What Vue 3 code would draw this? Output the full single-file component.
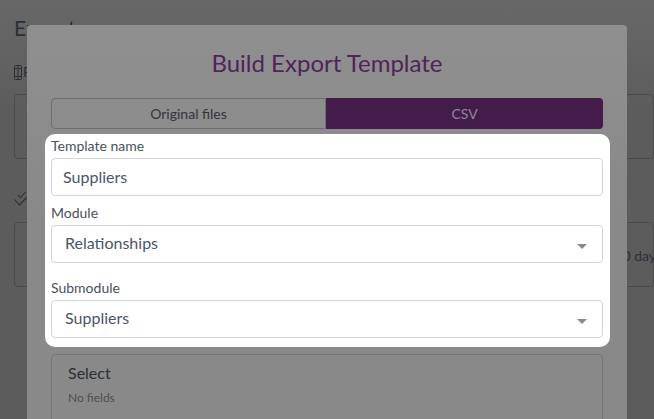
<script setup>
const fields = [
  { label: "Module", value: "Relationships" },
  { label: "Submodule", value: "Suppliers" },
];
</script>

<template>
  <div class="page">
    <h1 class="page-title">Exports</h1>
    <div class="section-head">
      <svg class="icon" viewBox="0 0 8 15" fill="none" stroke="#2b2f36" stroke-width="1">
        <rect x="0.5" y="0.5" width="7" height="14" rx="1" />
        <path d="M4 0.5v14M0.5 3.5h7M0.5 11.5h7" />
      </svg>
      <span>Reports</span>
    </div>
    <div class="panel"></div>
    <div class="section-head second">
      <svg class="icon check" viewBox="0 0 13 15" fill="none" stroke="#2b2f36" stroke-width="1.1">
        <path d="M4 4l2.5 2.5L11.5 1M0.5 8.5l5 5.5 7-7.5" />
      </svg>
      <span>Done</span>
    </div>
    <div class="panel retention"><span>30 days</span></div>

    <div class="overlay">
      <div class="modal">
        <h2 class="modal-title">Build Export Template</h2>
        <div class="tabs">
          <div class="tab">Original files</div>
          <div class="tab active">CSV</div>
        </div>
        <div class="spotlight">
          <label class="label">Template name</label>
          <div class="input">Suppliers</div>
          <template v-for="field in fields" :key="field.label">
            <label class="label select-label">{{ field.label }}</label>
            <div class="input select">
              <span>{{ field.value }}</span>
              <span class="caret"></span>
            </div>
          </template>
        </div>
        <div class="picker">
          <div class="picker-title">Select</div>
          <div class="picker-empty">No fields</div>
        </div>
      </div>
    </div>
  </div>
</template>

<style>
html,
body {
  margin: 0;
  overflow: hidden;
}
</style>

<style scoped>
.page {
  position: relative;
  box-sizing: border-box;
  width: 654px;
  height: 419px;
  padding: 16px 0 0 14px;
  overflow: hidden;
  background: linear-gradient(#686868, #5c5c5c 110px);
  font-family: Lato, "Liberation Sans", sans-serif;
  color: #2b2f36;
}
.page-title {
  margin: 0;
  font-size: 21px;
  font-weight: 400;
  line-height: 24px;
}
.section-head {
  display: flex;
  align-items: center;
  gap: 1px;
  margin-top: 23px;
  font-size: 14px;
  line-height: 18px;
}
.section-head.second {
  margin-top: 30px;
}
.icon {
  width: 8px;
  height: 15px;
}
.check {
  width: 13px;
}
.panel {
  box-sizing: border-box;
  height: 65px;
  margin-top: 13px;
  border: 1px solid #4a4a4a;
  border-radius: 4px;
}
.second + .panel {
  margin-top: 15px;
}
.retention {
  display: flex;
  align-items: center;
  justify-content: flex-end;
  font-size: 14px;
  white-space: nowrap;
}
.retention span {
  margin-right: -9px;
  padding-top: 2px;
}
.overlay {
  position: absolute;
  inset: 0;
}
.modal {
  box-sizing: border-box;
  width: 600px;
  height: 394px;
  margin: 25px 0 0 27px;
  padding: 21px 24px 0;
  border-radius: 4px 4px 0 0;
  background: linear-gradient(#8f8f8f, #898989 200px);
}
.modal-title {
  margin: 0;
  text-align: center;
  font-size: 24px;
  font-weight: 400;
  line-height: 34px;
  color: #4f2558;
}
.tabs {
  display: flex;
  height: 31px;
  margin-top: 18px;
  font-size: 14px;
}
.tab {
  flex: 0 0 275px;
  display: flex;
  align-items: center;
  justify-content: center;
  box-sizing: border-box;
  border: 1px solid #6f6f6f;
  border-radius: 4px 0 0 4px;
  color: #33363c;
}
.tab.active {
  flex: 1;
  border: none;
  border-radius: 0 4px 4px 0;
  background: #431c4c;
  color: #8b8b8b;
}
.spotlight {
  margin: 5px -7px 0 -6px;
  padding: 3px 7px 9px 6px;
  border-radius: 10px;
  background: #fff;
  color: #4a5568;
}
.label {
  display: block;
  font-size: 14px;
  line-height: 17px;
  color: #48505e;
}
.select-label {
  margin-top: 8px;
}
.select-label ~ .select-label {
  margin-top: 16px;
}
.input {
  display: flex;
  align-items: center;
  justify-content: space-between;
  box-sizing: border-box;
  height: 38px;
  margin-top: 4px;
  padding: 0 11px 2px;
  border: 1px solid #cfd5de;
  border-radius: 4px;
  font-size: 16px;
  color: #4a5568;
}
.select {
  padding: 0 15px 3px 13px;
}
.caret {
  width: 0;
  height: 0;
  margin-top: 7px;
  border-left: 5px solid transparent;
  border-right: 5px solid transparent;
  border-top: 5px solid #8a8a8a;
}
.picker {
  box-sizing: border-box;
  height: 120px;
  margin-top: 7px;
  padding: 8px 16px;
  border: 1px solid #777;
  border-radius: 4px;
}
.picker-title {
  font-size: 16px;
  line-height: 20px;
  color: #2b2f36;
}
.picker-empty {
  margin-top: 7px;
  font-size: 12px;
  line-height: 16px;
  color: #4c4f55;
}
</style>
